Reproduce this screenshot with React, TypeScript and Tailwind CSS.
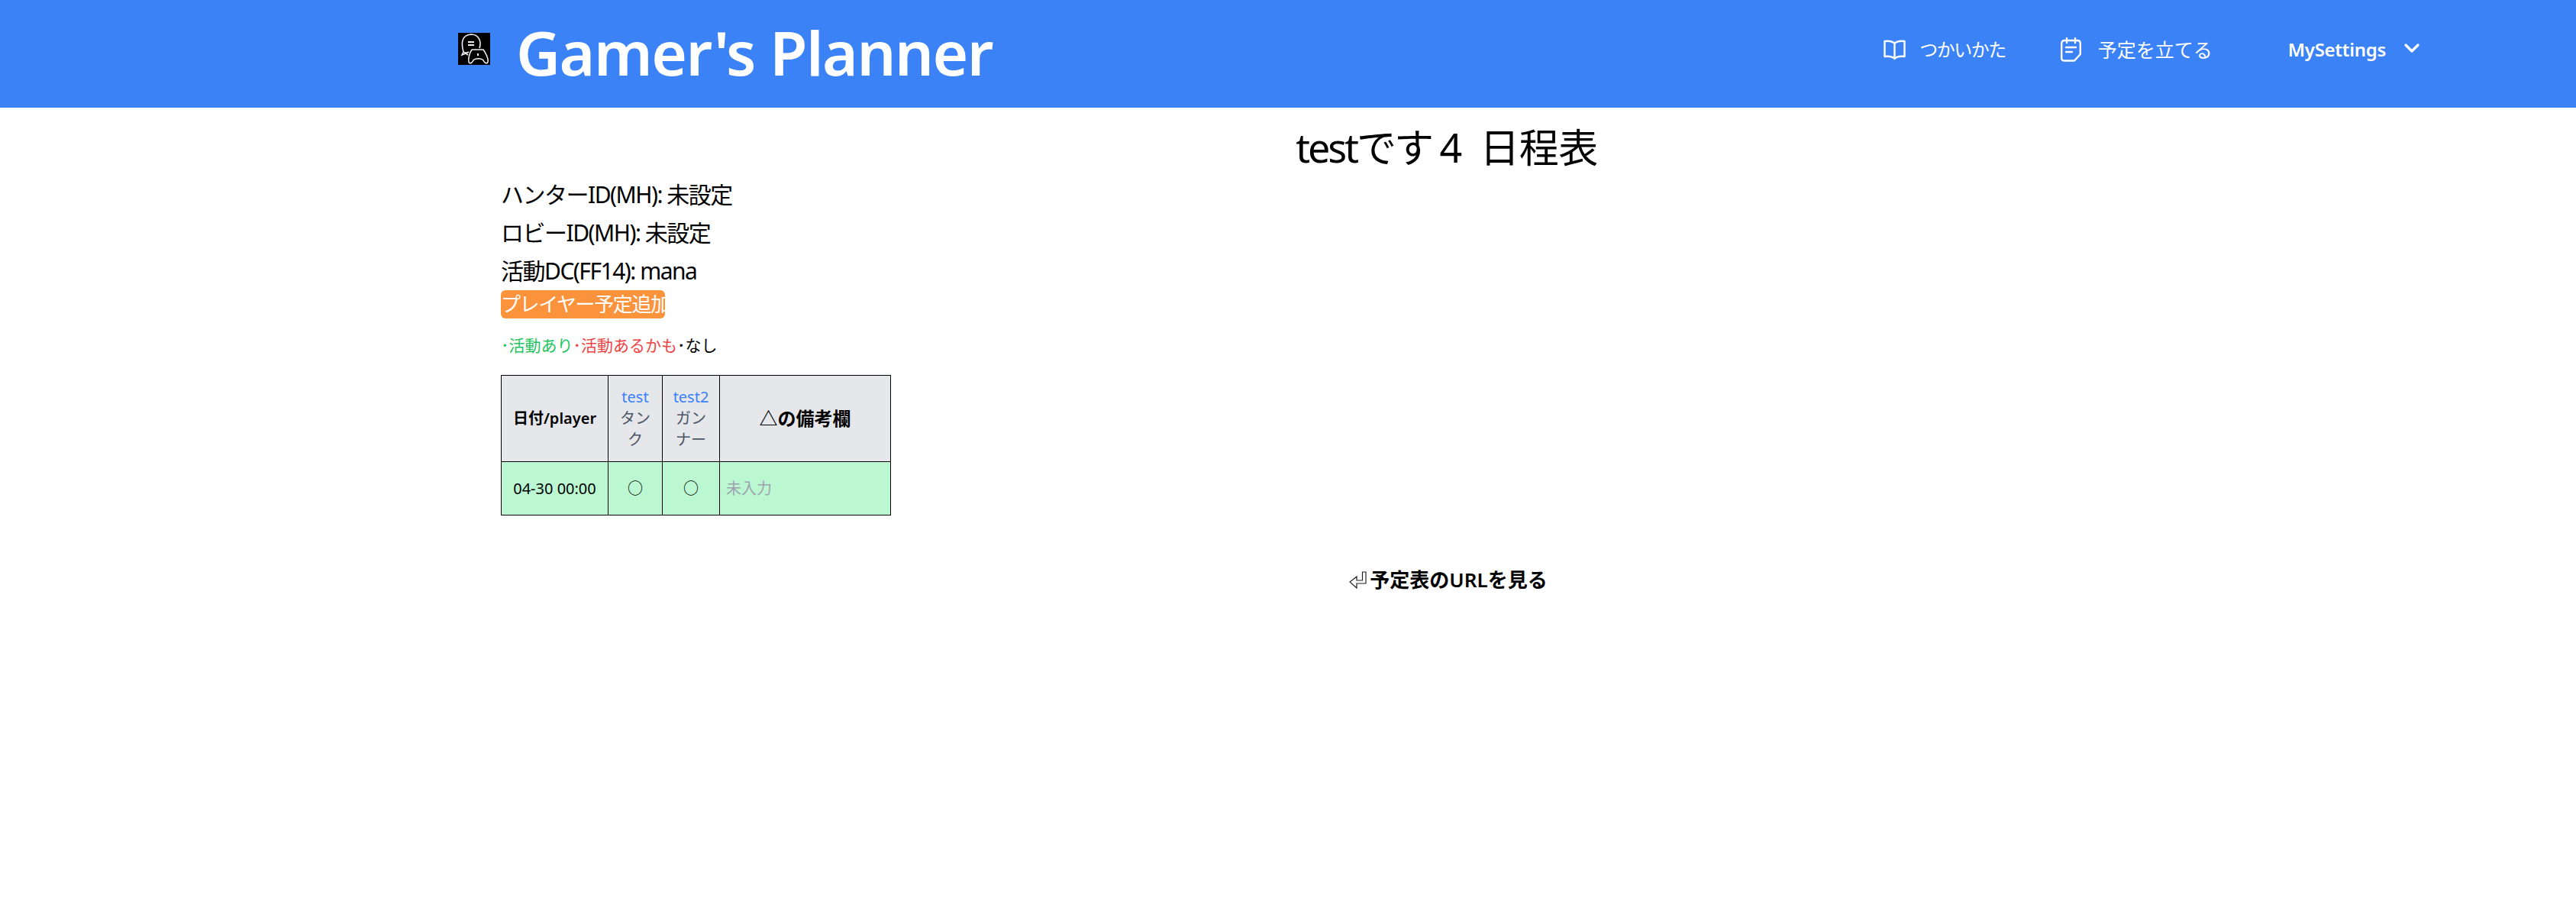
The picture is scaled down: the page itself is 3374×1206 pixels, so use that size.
import { ChevronDown } from 'lucide-react';

const jp = "font-['Noto_Sans','Noto_Sans_CJK_JP',sans-serif]";

function Logo() {
  return (
    <svg viewBox="0 0 42 42" className="block h-[42px] w-[42px] bg-black" fill="none" stroke="#eeeeee" strokeWidth="1.6">
      <path d="M14 25 C11 27 8 26 7 25 C4 14 4 3 17 2 C27 2 31 11 28 20" />
      <path d="M7 25 L5 29 L10 27 L13 29" />
      <path d="M13 12 H21 M13 16 H21" strokeWidth="1.8" />
      <path d="M18 22 H33 C36 26 40 34 39 38 C38 41 35 40 33 36 C31 33 22 33 20 36 C18 40 15 41 14 38 C13 34 15 26 18 22 Z" />
      <path d="M26 27 V30" strokeWidth="2" />
    </svg>
  );
}

function BookIcon() {
  return (
    <svg viewBox="0 0 29 27" className="block h-[27px] w-[29px]" fill="none" stroke="white" strokeWidth="2.4" strokeLinejoin="round">
      <path d="M14.5 5 C12 2 6 1.5 1.5 2 V22 C6 21.5 12 22 14.5 25 C17 22 23 21.5 27.5 22 V2 C23 1.5 17 2 14.5 5 Z M14.5 5 V25" />
    </svg>
  );
}

function NoteIcon() {
  return (
    <svg viewBox="0 0 27 32" className="block h-[32px] w-[27px]" fill="none" stroke="white" strokeWidth="2.4" strokeLinejoin="round">
      <path d="M5 4 H22 C24.5 4 25.8 5.3 25.8 8 V22 L18 30.5 H5 C2.5 30.5 1.2 29 1.2 27 V8 C1.2 5.3 2.5 4 5 4 Z" />
      <path d="M8 1 V7 M19 1 V7 M7 13 H20 M7 19 H15" strokeLinecap="round" />
    </svg>
  );
}

function ReturnIcon() {
  return (
    <svg viewBox="0 0 23 23" className="block h-[23px] w-[23px] shrink-0" fill="none" stroke="#222222" strokeWidth="1.2">
      <path d="M22 1 V16 H10 V22 L1 14 L10 7 V12 H17.5 V1 Z" />
    </svg>
  );
}

function Header() {
  return (
    <header className="h-[141px] bg-[#3b82f6] text-white">
      <div className="ml-[600px] flex h-full w-[2575px] items-start">
        <div className="mt-[43px]">
          <Logo />
        </div>
        <h1 className="ml-[34px] mt-[14px] text-[80px] leading-[108px] font-semibold tracking-[-1.5px]">Gamer's Planner</h1>
        <nav className="ml-auto flex items-center pt-[48px]">
          <span className="flex items-center gap-[18px]">
            <BookIcon />
            <span className="text-[24px] leading-[34px] tracking-[-1.5px]">つかいかた</span>
          </span>
          <span className="ml-[72px] flex items-center gap-[22px]">
            <NoteIcon />
            <span className="text-[25px] leading-[34px]">予定を立てる</span>
          </span>
          <span className="ml-[99px] flex items-center gap-[18px]">
            <span className="text-[24px] leading-[34px] font-semibold tracking-[-0.3px]">MySettings</span>
            <ChevronDown size={32} strokeWidth={2.4} className="-mt-[4px]" />
          </span>
        </nav>
      </div>
    </header>
  );
}

const infoRows = ['ハンターID(MH): 未設定', 'ロビーID(MH): 未設定', '活動DC(FF14): mana'];

function Schedule() {
  return (
    <table className="mt-[24px] w-[511px] table-fixed border-collapse text-center text-black">
      <thead>
        <tr className="h-[113px] bg-[#e5e7eb]">
          <th className="w-[140px] border border-black p-0 text-[20px] font-semibold">日付/player</th>
          <th className="w-[71px] border border-black p-0 text-[20px] leading-[28px] font-normal">
            <div className="text-[#3b82f6]">test</div>
            <div className="text-[#4b5563]">タン<br />ク</div>
          </th>
          <th className="w-[75px] border border-black p-0 text-[20px] leading-[28px] font-normal">
            <div className="text-[#3b82f6]">test2</div>
            <div className="text-[#4b5563]">ガン<br />ナー</div>
          </th>
          <th className="border border-black p-0 text-[24px] font-semibold">△の備考欄</th>
        </tr>
      </thead>
      <tbody>
        <tr className="h-[70px] bg-[#bbf7d0]">
          <td className="border border-black p-0 text-[20px]">04-30 00:00</td>
          <td className="border border-black p-0 text-[20px]">○</td>
          <td className="border border-black p-0 text-[20px]">○</td>
          <td className="border border-black px-2 py-0 text-left text-[20px] text-[#9ca3af]">未入力</td>
        </tr>
      </tbody>
    </table>
  );
}

export default function App() {
  return (
    <div className={`min-h-screen bg-white text-black ${jp}`}>
      <Header />
      <main className="ml-[656px] w-[2478px]">
        <h2 className="mt-[16px] text-center text-[52px] leading-[72px] font-normal tracking-[-0.5px]">
          <span className="tracking-[-3px]">testです 4</span> &nbsp;日程表
        </h2>
        <div className="mt-[1px]">
          {infoRows.map((row) => (
            <p key={row} className="text-[30px] leading-[50px] tracking-[-1.5px]">{row}</p>
          ))}
        </div>
        <button className="block w-[215px] whitespace-nowrap rounded-md bg-[#fb923c] text-[26px] leading-[37px] tracking-[-1.4px] text-white">プレイヤー予定追加</button>
        <p className="mt-[20px] text-[21px] leading-[30px]">
          <span className="text-[#22c55e]">･活動あり</span>
          <span className="text-[#ef4444]">･活動あるかも</span>
          <span>･なし</span>
        </p>
        <Schedule />
        <p className="mt-[66px] flex items-center justify-center gap-[4px] pl-[4px] text-[26px] leading-[36px] font-semibold">
          <ReturnIcon />
          予定表のURLを見る
        </p>
      </main>
    </div>
  );
}
